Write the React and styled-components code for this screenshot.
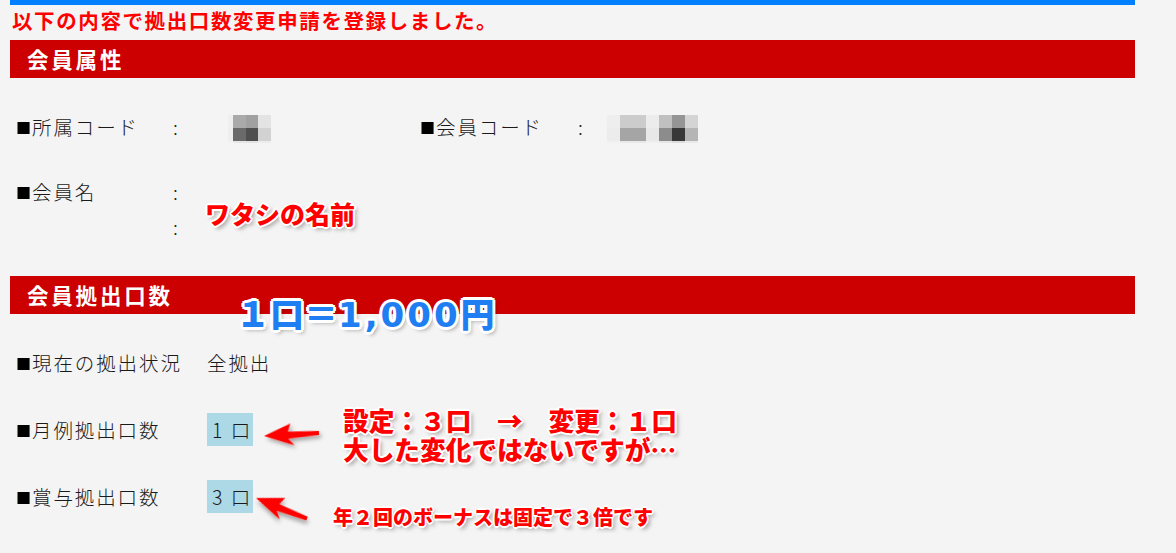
import React from 'react'
import styled, { createGlobalStyle, css } from 'styled-components'

const GlobalStyle = createGlobalStyle`
  html, body {
    margin: 0;
    padding: 0;
    background: #f4f4f4;
  }
  body {
    font-family: "Noto Sans CJK JP", "Noto Sans", sans-serif;
  }
`

const Page = styled.div`
  position: relative;
  width: 1176px;
  height: 553px;
  overflow: hidden;
  padding-left: 10px;
  box-sizing: border-box;
`

const Main = styled.div`
  width: 1125px;
`

const TopLine = styled.div`
  height: 5px;
  background: #0080ff;
`

const Notice = styled.p`
  margin: 0;
  height: 35px;
  line-height: 30px;
  padding-left: 2px;
  color: #ff0000;
  font-size: 20.5px;
  font-weight: 700;
  letter-spacing: 1.6px;
`

const SectionBar = styled.h2`
  margin: 0;
  height: 38px;
  line-height: 38px;
  padding-left: 17px;
  background: #cc0000;
  color: #ffffff;
  font-size: 21.5px;
  font-weight: 700;
  letter-spacing: 2.8px;
`

const SectionBody = styled.div`
  display: flex;
  flex-direction: column;
  gap: ${p => p.$gap}px;
  padding: 31px 0 ${p => p.$bottom}px 6px;
`

const AttrRow = styled.div`
  display: grid;
  grid-template-columns: 157px 55px 192px 158px 29px auto;
  align-items: start;
  color: #1a1a1a;
  font-size: 19.5px;
  font-weight: 300;
  line-height: 35px;
  letter-spacing: 1.9px;
`

const Label = styled.div`
  white-space: nowrap;
`

const Bullet = styled.span`
  display: inline-block;
  width: 16px;
  font-size: 15px;
  letter-spacing: 0;
  color: #000;
  vertical-align: 1px;
`

const ColonStack = styled.div`
  display: flex;
  flex-direction: column;
`

const Mosaic = styled.svg`
  display: block;
  margin-top: 6px;
`

const CountRow = styled.div`
  display: grid;
  grid-template-columns: 191px auto;
  align-items: center;
  height: 34px;
  color: #1a1a1a;
  font-size: 19.5px;
  font-weight: 300;
  letter-spacing: 1.9px;
`

const Value = styled.span`
  justify-self: start;
  line-height: 33px;
  ${p => p.$boxed && css`
    background: #add8e6;
    padding: 0 1px 0 5px;
    letter-spacing: 2px;
  `}
`

const outline = (w, shadow) => `
  ${w}px 0 0 #fff, -${w}px 0 0 #fff, 0 ${w}px 0 #fff, 0 -${w}px 0 #fff,
  ${w * 0.7}px ${w * 0.7}px 0 #fff, -${w * 0.7}px ${w * 0.7}px 0 #fff,
  ${w * 0.7}px -${w * 0.7}px 0 #fff, -${w * 0.7}px -${w * 0.7}px 0 #fff,
  ${shadow}
`

const Note = styled.div`
  position: absolute;
  left: ${p => p.$x}px;
  top: ${p => p.$y}px;
  white-space: nowrap;
  font-weight: 900;
  color: ${p => p.$color || '#ff0000'};
  font-size: ${p => p.$size}px;
  line-height: ${p => p.$lh || p.$size}px;
  text-shadow: ${p => outline(p.$stroke || 2, '3px 3px 4px rgba(0,0,0,0.35)')};
`

const Digits = styled.span`
  font-family: "DejaVu Sans", sans-serif;
  letter-spacing: 3px;
`

const Arrows = styled.svg`
  position: absolute;
  left: 0;
  top: 0;
  pointer-events: none;
`

const MosaicBlock = ({ cols, rows }) => {
  const w = cols.reduce((a, b) => a + b, 0)
  const heights = [13, 13, 2]
  let y = 0
  const rects = []
  rows.forEach((row, ri) => {
    let x = 0
    row.forEach((c, ci) => {
      rects.push(<rect key={`${ri}-${ci}`} x={x} y={y} width={cols[ci]} height={heights[ri]} fill={c} />)
      x += cols[ci]
    })
    y += heights[ri]
  })
  return (
    <Mosaic width={w} height={28} viewBox={`0 0 ${w} 28`}>
      {rects}
    </Mosaic>
  )
}

const affiliation = {
  cols: [5, 13, 12, 13],
  rows: [
    ['#efefef', '#aaaaaa', '#a0a0a0', '#e3e3e3'],
    ['#eeeeee', '#6a6a6a', '#4f4f4f', '#d2d2d2'],
    ['#f1f1f1', '#e6e6e6', '#e4e4e4', '#ececec'],
  ],
}

const memberCode = {
  cols: [13, 13, 13, 13, 13, 13, 13],
  rows: [
    ['#eeeeee', '#cccccc', '#cccccc', '#ececec', '#c0c0c0', '#959595', '#d4d4d4'],
    ['#ececec', '#a5a5a5', '#a5a5a5', '#e8e8e8', '#8c8c8c', '#383838', '#b5b5b5'],
    ['#f1f1f1', '#e8e8e8', '#e8e8e8', '#efefef', '#e6e6e6', '#dcdcdc', '#e8e8e8'],
  ],
}

const arrowShape = '0,0 27,-11 24,-3 55,-2 55,2 24,4 30,11'

const App = () => {
  return (
    <>
      <GlobalStyle />
      <Page>
        <Main>
          <TopLine />
          <Notice>以下の内容で拠出口数変更申請を登録しました。</Notice>

          <SectionBar>会員属性</SectionBar>
          <SectionBody $gap={29} $bottom={32}>
            <AttrRow>
              <Label><Bullet>■</Bullet>所属コード</Label>
              <div>:</div>
              <MosaicBlock {...affiliation} />
              <Label><Bullet>■</Bullet>会員コード</Label>
              <div>:</div>
              <MosaicBlock {...memberCode} />
            </AttrRow>
            <AttrRow>
              <Label><Bullet>■</Bullet>会員名</Label>
              <ColonStack>
                <span>:</span>
                <span>:</span>
              </ColonStack>
            </AttrRow>
          </SectionBody>

          <SectionBar>会員拠出口数</SectionBar>
          <SectionBody $gap={33} $bottom={20}>
            <CountRow>
              <Label><Bullet>■</Bullet>現在の拠出状況</Label>
              <Value>全拠出</Value>
            </CountRow>
            <CountRow>
              <Label><Bullet>■</Bullet>月例拠出口数</Label>
              <Value $boxed>1 口</Value>
            </CountRow>
            <CountRow>
              <Label><Bullet>■</Bullet>賞与拠出口数</Label>
              <Value $boxed>3 口</Value>
            </CountRow>
          </SectionBody>
        </Main>

        <Note $x={205} $y={201} $size={25}>ワタシの名前</Note>
        <Note $x={236} $y={296} $size={34} $color="#1e7ef2" $stroke={3}>
          １口＝<Digits>1,000</Digits>円
        </Note>
        <Note $x={343} $y={405} $size={25.7} $lh={29}>
          設定：３口　→　変更：１口
          <br />
          大した変化ではないですが…
        </Note>
        <Note $x={333} $y={507} $size={20} $stroke={1.6}>年２回のボーナスは固定で３倍です</Note>

        <Arrows width="1176" height="553" viewBox="0 0 1176 553">
          <defs>
            <filter id="arrowShadow" x="-30%" y="-30%" width="160%" height="160%">
              <feDropShadow dx="2" dy="3" stdDeviation="2" floodColor="#000" floodOpacity="0.35" />
            </filter>
          </defs>
          <polygon points={arrowShape} fill="#ff0000" filter="url(#arrowShadow)"
            transform="translate(264 436) rotate(-3.2)" />
          <polygon points={arrowShape} fill="#ff0000" filter="url(#arrowShadow)"
            transform="translate(256 498) rotate(22)" />
        </Arrows>
      </Page>
    </>
  )
}

export default App
